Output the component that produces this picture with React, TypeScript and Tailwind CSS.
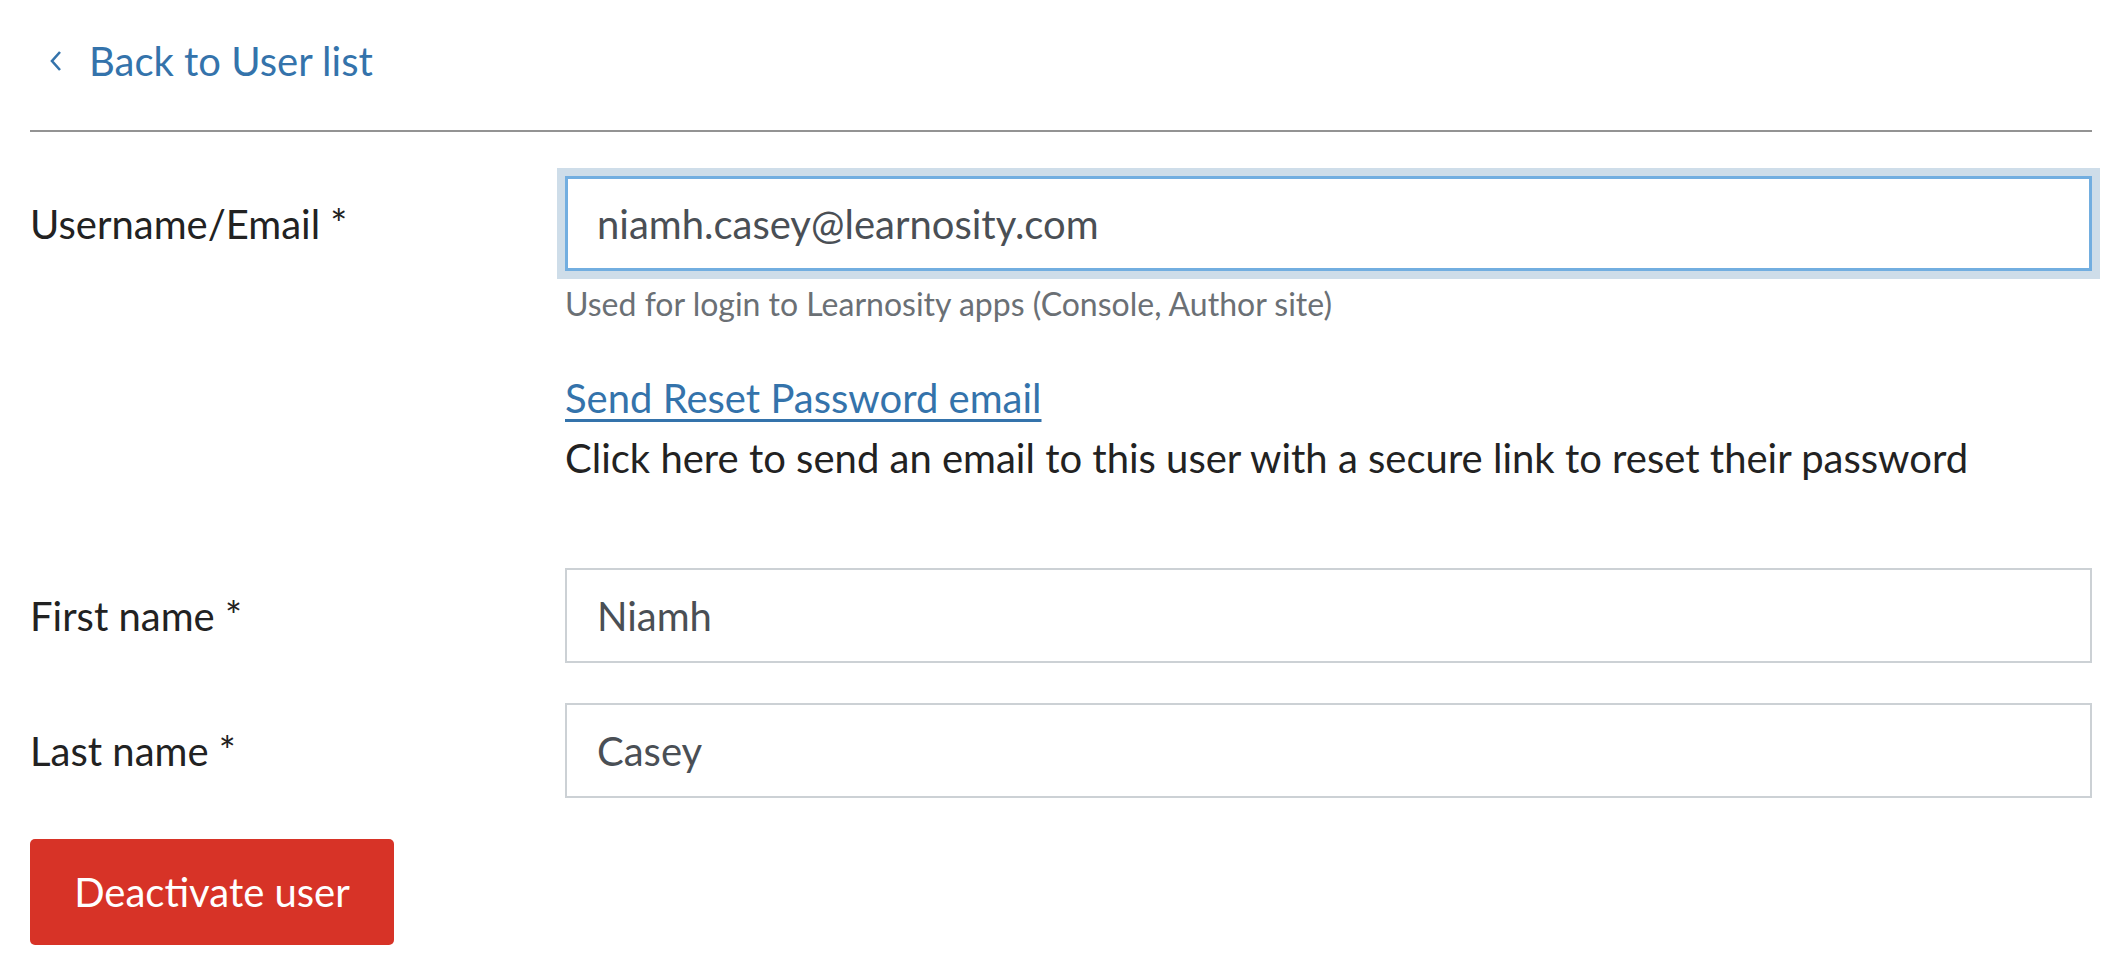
import React from 'react';

const labelCls = "h-[95px] flex items-center text-[40px] text-[#222]";
const inputCls =
  "w-full h-[95px] px-[30px] border-2 border-[#ccd1d5] bg-white text-[40px] text-[#4a4f55] outline-none font-['Lato',sans-serif]";

export default function App() {
  return (
    <div className="min-h-screen bg-white pl-[30px] pr-[20px] font-['Lato','Liberation_Sans',sans-serif]">
      {/* back link */}
      <div className="h-[130px] flex items-center pb-[8px]">
        <a href="#" className="flex items-center text-[#3473ab] text-[40px]">
          <svg width="14" height="22" viewBox="0 0 14 22" className="ml-[19px] mr-[26px]">
            <path d="M11 2 L3 11 L11 20" fill="none" stroke="#3473ab" strokeWidth="2.6" />
          </svg>
          Back to User list
        </a>
      </div>
      <div className="border-t-2 border-[#939393]" />

      <div className="mt-[44px] grid grid-cols-[535px_1fr]">
        <div className={labelCls}>Username/Email *</div>
        <div>
          <input
            defaultValue="niamh.casey@learnosity.com"
            className="w-full h-[95px] px-[29px] border-[3px] border-[#72aee0] bg-white text-[40px] text-[#4a4f55] outline-none shadow-[0_0_0_8px_#cedde9] font-['Lato',sans-serif]"
          />
          <div className="mt-[13px] text-[32px] leading-[40px] text-[#6b7075]">
            Used for login to Learnosity apps (Console, Author site)
          </div>
          <div className="mt-[44px] leading-[60px] text-[40px]">
            <a href="#" className="text-[#3473ab] underline decoration-[3px] underline-offset-[6px]">
              Send Reset Password email
            </a>
          </div>
          <div className="leading-[60px] text-[40px] text-[#222]">
            Click here to send an email to this user with a secure link to reset their password
          </div>
        </div>

        <div className={`${labelCls} mt-[80px]`}>First name *</div>
        <div className="mt-[80px]">
          <input defaultValue="Niamh" className={inputCls} />
        </div>

        <div className={`${labelCls} mt-[40px]`}>Last name *</div>
        <div className="mt-[40px]">
          <input defaultValue="Casey" className={inputCls} />
        </div>
      </div>

      <button className="mt-[41px] h-[106px] w-[364px] rounded-[5px] bg-[#d73327] text-white text-[40px] font-['Lato',sans-serif]">
        Deactivate user
      </button>
    </div>
  );
}
